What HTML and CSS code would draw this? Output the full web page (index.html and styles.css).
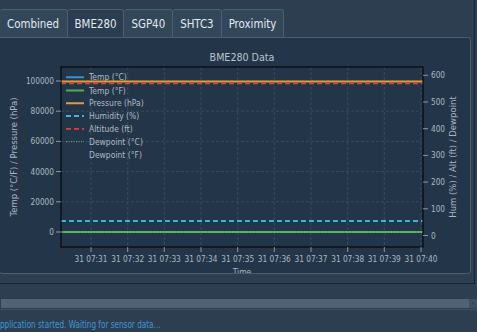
FILE: index.html
```html
<!DOCTYPE html>
<html>
<head>
<meta charset="utf-8">
<link rel="stylesheet" href="styles.css">
</head>
<body>
<div class="app">
  <div class="tabwidget">
    <div class="tabbar">
      <div class="tab tab-first">Combined</div>
      <div class="tab tab-active">BME280</div>
      <div class="tab">SGP40</div>
      <div class="tab">SHTC3</div>
      <div class="tab">Proximity</div>
    </div>
    <div class="pane">
      <svg class="chart" width="470" height="236" viewBox="0 38 470 236" xmlns="http://www.w3.org/2000/svg">
        <text class="title" x="241" y="61" text-anchor="middle">BME280 Data</text>
        <g class="grid">
          <line x1="90" y1="67" x2="90" y2="247"/>
          <line x1="126.7" y1="67" x2="126.7" y2="247"/>
          <line x1="163.3" y1="67" x2="163.3" y2="247"/>
          <line x1="200" y1="67" x2="200" y2="247"/>
          <line x1="236.7" y1="67" x2="236.7" y2="247"/>
          <line x1="273.3" y1="67" x2="273.3" y2="247"/>
          <line x1="310" y1="67" x2="310" y2="247"/>
          <line x1="346.7" y1="67" x2="346.7" y2="247"/>
          <line x1="383.3" y1="67" x2="383.3" y2="247"/>
          <line x1="420" y1="67" x2="420" y2="247"/>
          <line x1="60" y1="81" x2="422" y2="81"/>
          <line x1="60" y1="111.2" x2="422" y2="111.2"/>
          <line x1="60" y1="141.4" x2="422" y2="141.4"/>
          <line x1="60" y1="171.6" x2="422" y2="171.6"/>
          <line x1="60" y1="201.8" x2="422" y2="201.8"/>
          <line x1="60" y1="232" x2="422" y2="232"/>
        </g>
        <line class="s-pres" x1="60" y1="81.5" x2="422" y2="81.5"/>
        <line class="s-alt" x1="60" y1="83.3" x2="422" y2="83.3"/>
        <line class="s-hum" x1="60" y1="221" x2="422" y2="221"/>
        <line class="s-tc" x1="60" y1="232" x2="422" y2="232"/>
        <line class="s-tf" x1="60" y1="232" x2="422" y2="232"/>
        <line class="s-dew" x1="60" y1="232" x2="422" y2="232"/>
        <g class="legend">
          <line class="s-tc" x1="65" y1="77.3" x2="83" y2="77.3"/>
          <text x="88" y="80.4">Temp (°C)</text>
          <line class="s-tf" x1="65" y1="90.4" x2="83" y2="90.4"/>
          <text x="88" y="93.5">Temp (°F)</text>
          <line class="s-pres" x1="65" y1="103.3" x2="83" y2="103.3"/>
          <text x="88" y="106.4">Pressure (hPa)</text>
          <line class="s-hum" x1="65" y1="116" x2="83" y2="116"/>
          <text x="88" y="119.1">Humidity (%)</text>
          <line class="s-alt" x1="65" y1="128.8" x2="83" y2="128.8"/>
          <text x="88" y="131.9">Altitude (ft)</text>
          <line class="s-dewleg" x1="65" y1="141.7" x2="83" y2="141.7"/>
          <text x="88" y="144.8">Dewpoint (°C)</text>
          <text x="88" y="157.7">Dewpoint (°F)</text>
        </g>
        <rect class="frame" x="60" y="67" width="362" height="180"/>
        <g class="ticks">
          <line x1="55" y1="81" x2="60" y2="81"/>
          <line x1="55" y1="111.2" x2="60" y2="111.2"/>
          <line x1="55" y1="141.4" x2="60" y2="141.4"/>
          <line x1="55" y1="171.6" x2="60" y2="171.6"/>
          <line x1="55" y1="201.8" x2="60" y2="201.8"/>
          <line x1="55" y1="232" x2="60" y2="232"/>
          <line x1="422" y1="75.3" x2="427" y2="75.3"/>
          <line x1="422" y1="102" x2="427" y2="102"/>
          <line x1="422" y1="128.7" x2="427" y2="128.7"/>
          <line x1="422" y1="155.4" x2="427" y2="155.4"/>
          <line x1="422" y1="182.1" x2="427" y2="182.1"/>
          <line x1="422" y1="208.8" x2="427" y2="208.8"/>
          <line x1="422" y1="235.5" x2="427" y2="235.5"/>
          <line x1="90" y1="247" x2="90" y2="252"/>
          <line x1="126.7" y1="247" x2="126.7" y2="252"/>
          <line x1="163.3" y1="247" x2="163.3" y2="252"/>
          <line x1="200" y1="247" x2="200" y2="252"/>
          <line x1="236.7" y1="247" x2="236.7" y2="252"/>
          <line x1="273.3" y1="247" x2="273.3" y2="252"/>
          <line x1="310" y1="247" x2="310" y2="252"/>
          <line x1="346.7" y1="247" x2="346.7" y2="252"/>
          <line x1="383.3" y1="247" x2="383.3" y2="252"/>
          <line x1="420" y1="247" x2="420" y2="252"/>
        </g>
        <g class="ticklabels">
          <text x="53" y="84" text-anchor="end">100000</text>
          <text x="53" y="114.2" text-anchor="end">80000</text>
          <text x="53" y="144.4" text-anchor="end">60000</text>
          <text x="53" y="174.6" text-anchor="end">40000</text>
          <text x="53" y="204.8" text-anchor="end">20000</text>
          <text x="53" y="235" text-anchor="end">0</text>
          <text x="430" y="78.3">600</text>
          <text x="430" y="105">500</text>
          <text x="430" y="131.7">400</text>
          <text x="430" y="158.4">300</text>
          <text x="430" y="185.1">200</text>
          <text x="430" y="211.8">100</text>
          <text x="430" y="238.5">0</text>
          <text x="90" y="262" text-anchor="middle">31 07:31</text>
          <text x="126.7" y="262" text-anchor="middle">31 07:32</text>
          <text x="163.3" y="262" text-anchor="middle">31 07:33</text>
          <text x="200" y="262" text-anchor="middle">31 07:34</text>
          <text x="236.7" y="262" text-anchor="middle">31 07:35</text>
          <text x="273.3" y="262" text-anchor="middle">31 07:36</text>
          <text x="310" y="262" text-anchor="middle">31 07:37</text>
          <text x="346.7" y="262" text-anchor="middle">31 07:38</text>
          <text x="383.3" y="262" text-anchor="middle">31 07:39</text>
          <text x="420" y="262" text-anchor="middle">31 07:40</text>
        </g>
        <text class="axlabel" x="241" y="275" text-anchor="middle">Time</text>
        <text class="ylabel" transform="translate(15.5 157) rotate(-90)" text-anchor="middle">Temp (°C/F) / Pressure (hPa)</text>
        <text class="ylabel" transform="translate(455 157) rotate(-90)" text-anchor="middle">Hum (%) / Alt (ft) / Dewpoint</text>
      </svg>
    </div>
  </div>
  <div class="scrollbar">
    <div class="scroll-track"></div>
    <div class="scroll-arrow">
      <svg width="5" height="9" viewBox="0 0 5 9"><path d="M1.5 3 L3.5 4.5 L1.5 6 Z" fill="#2c3e50"/></svg>
    </div>
  </div>
  <div class="statusbar"><span class="status-text">Application started. Waiting for sensor data...</span></div>
</div>
</body>
</html>
```
FILE: styles.css
```css
* { box-sizing: border-box; }
html, body {
  margin: 0;
  padding: 0;
}
body {
  width: 477px;
  height: 332px;
  overflow: hidden;
  background: #2c3e50;
  font-family: "DejaVu Sans Condensed", "DejaVu Sans", sans-serif;
}
.app {
  display: flex;
  flex-direction: column;
}
.tabwidget {
  width: 475px;
  height: 284px;
  padding-top: 9px;
  border-right: 1px solid #18232e;
  border-bottom: 1px solid #18232e;
}
.tabbar {
  display: flex;
  height: 28px;
}
.tab {
  height: 28px;
  padding: 0 7px;
  line-height: 28px;
  font-size: 11.4px;
  color: #e4e9ee;
  background: #33475b;
  border: 1px solid #4d5e6f;
  border-bottom: none;
  border-left: none;
  border-radius: 3px 3px 0 0;
}
.tab-first {
  padding-left: 7px;
  padding-right: 7.5px;
}
.tab-active {
  background: #2b3d50;
}
.pane {
  width: 472px;
  height: 237px;
  margin-left: -1px;
  background: #233649;
  border: 1px solid #4d5e6f;
  border-radius: 0 3px 3px 3px;
  overflow: hidden;
}
.chart {
  display: block;
  margin-left: 1px;
}
.title {
  font-family: "DejaVu Sans Condensed", "DejaVu Sans", sans-serif;
  font-size: 10.6px;
  fill: #b9c4cf;
}
.grid line {
  stroke: #3d5064;
  stroke-width: 0.8;
  stroke-dasharray: 3 2;
}
.frame {
  fill: none;
  stroke: #05080c;
  stroke-width: 1.2;
}
.ticks line {
  stroke: #a6b2be;
  stroke-width: 0.8;
}
.ticklabels text {
  font-family: "DejaVu Sans Condensed", "DejaVu Sans", sans-serif;
  font-size: 8.2px;
  fill: #aab6c2;
}
.axlabel {
  font-family: "DejaVu Sans Condensed", "DejaVu Sans", sans-serif;
  font-size: 8.5px;
  fill: #aab6c2;
}
.ylabel {
  font-family: "DejaVu Sans", sans-serif;
  font-size: 8.5px;
  fill: #aab6c2;
}
.legend text {
  font-family: "DejaVu Sans Condensed", "DejaVu Sans", sans-serif;
  font-size: 8.5px;
  fill: #aeb9c5;
}
.s-tc { stroke: #3b8fd6; stroke-width: 2; }
.s-tf { stroke: #4caf50; stroke-width: 2; }
.s-pres { stroke: #e39b3c; stroke-width: 2; }
.s-hum { stroke: #41b1d8; stroke-width: 1.8; stroke-dasharray: 5 3; }
.s-alt { stroke: #d8433b; stroke-width: 1.8; stroke-dasharray: 5 3; }
.s-dew { stroke: #93c98f; stroke-width: 1; stroke-dasharray: 1 2; }
.s-dewleg { stroke: #7a8c9f; stroke-width: 1.2; stroke-dasharray: 1 1.5; }

.scrollbar {
  display: flex;
  width: 477px;
  height: 9px;
  margin-top: 15px;
}
.scroll-track {
  flex: 1;
  margin-left: 1px;
  background: #506274;
}
.scroll-arrow {
  width: 8px;
  background: #3e5063;
  display: flex;
  justify-content: center;
}
.statusbar {
  margin-top: 1px;
  border-top: 1px solid #3e5063;
  height: 23px;
  padding-top: 9px;
  font-family: "DejaVu Sans Condensed", "DejaVu Sans", sans-serif;
  font-size: 10px;
  line-height: 12px;
  color: #3b98da;
  white-space: nowrap;
}
.status-text {
  display: inline-block;
  margin-left: -5px;
  transform: scaleX(0.81);
  transform-origin: 0 0;
}
```
